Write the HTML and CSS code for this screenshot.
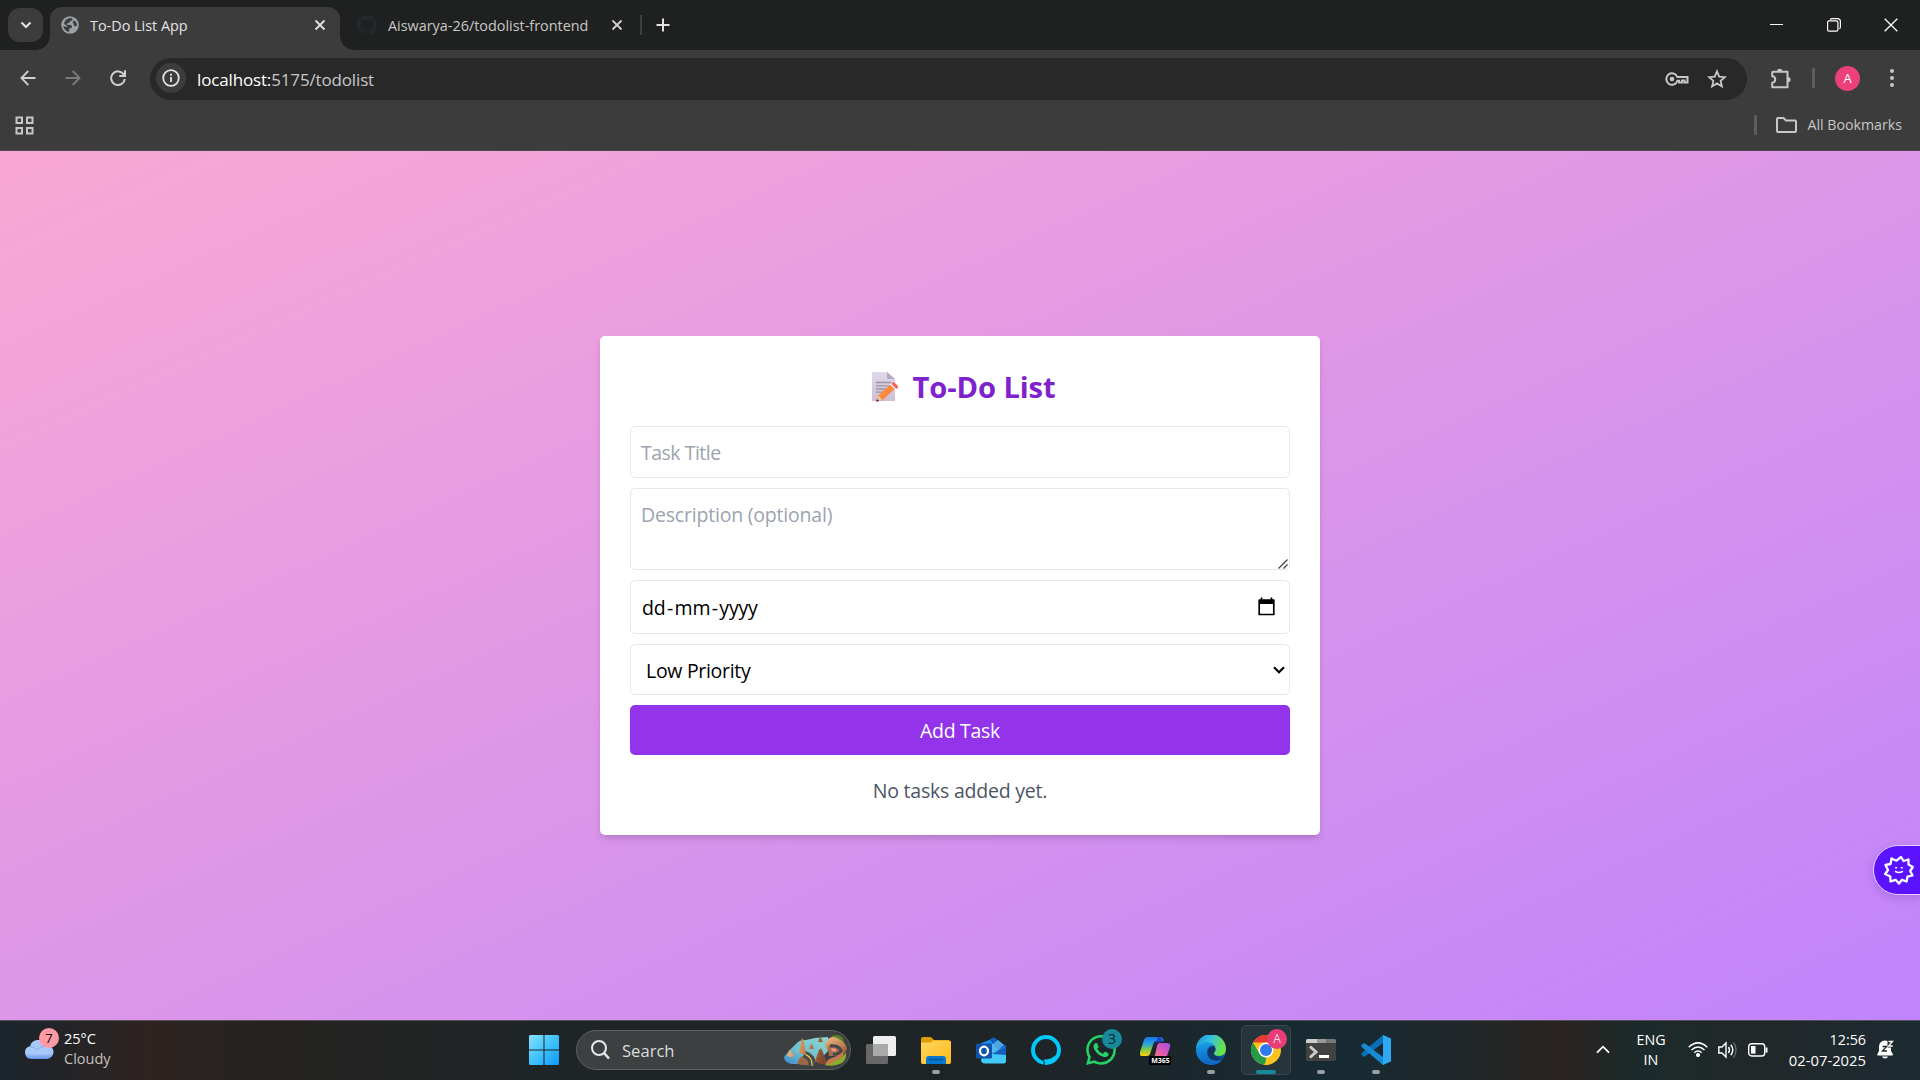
FILE: index.html
```html
<!DOCTYPE html>
<html lang="en">
<head>
<meta charset="utf-8">
<title>To-Do List App</title>
<link rel="stylesheet" href="styles.css">
</head>
<body>
<header class="browser">
  <div class="tabstrip">
    <button class="tab-search" aria-label="Search tabs"><svg width="12" height="8" viewBox="0 0 12 8" fill="none" stroke="#e3e3e3" stroke-width="2"><path d="M1.500 1.500 6 6l4.500-4.500"/></svg></button>
    <div class="tab tab-active">
      <svg class="favicon" width="18" height="18" viewBox="0 0 18 18"><circle cx="9" cy="9" r="8.800" fill="#9aa0a6"/><path d="M9.800 2q1 .2 1.700.7.400 1.800-1.600 2.300-1.500.4-1.500 1.500 0 .9-1.600.8-1.100-.1-1 .8.200 1 1.600.8 1.800-.3 2.900.5 1 .8.700 1.800-.3.900-1.500.9-1.300 0-1.200 1.300.1 1.500-.8 2.500Q3.300 14.500 2.200 10q2.500.4 3.800 1.300.7-1.200-.8-2Q3.500 8.600 3 7.200 4.500 2.200 9.800 2z" fill="#3c3c3c"/><path d="M13 4.500q3 1.700 3 5-1.300 1.300-2.800.2-.9-.8-.5-2.200-2.300-.9.300-3z" fill="#3c3c3c"/></svg>
      <span class="tab-title">To-Do List App</span>
      <svg class="close" width="12" height="12" viewBox="0 0 12 12" stroke="#e3e3e3" stroke-width="1.800"><path d="m1.500 1.500 9 9m0-9-9 9"/></svg>
    </div>
    <div class="tab tab-idle">
      <svg class="favicon" width="20" height="20" viewBox="0 0 16 16" fill="#24292f"><path d="M8 0C3.580 0 0 3.580 0 8c0 3.540 2.290 6.530 5.470 7.590.4.070.55-.17.55-.38 0-.19-.01-.82-.01-1.490-2.010.37-2.530-.49-2.690-.94-.09-.23-.48-.94-.82-1.130-.28-.15-.68-.52-.01-.53.63-.01 1.080.58 1.230.82.720 1.210 1.870.87 2.330.66.070-.52.280-.87.510-1.070-1.780-.2-3.640-.89-3.640-3.950 0-.87.310-1.590.82-2.150-.08-.2-.36-1.020.080-2.120 0 0 .67-.21 2.200.82.640-.18 1.320-.27 2-.27s1.360.090 2 .27c1.530-1.040 2.200-.82 2.200-.82.440 1.100.160 1.920.080 2.120.510.560.82 1.270.82 2.150 0 3.070-1.870 3.750-3.650 3.950.290.250.540.730.540 1.480 0 1.070-.010 1.930-.010 2.200 0 .210.150.460.550.380A8 8 0 0 0 16 8c0-4.420-3.580-8-8-8z"/></svg>
      <span class="tab-title">Aiswarya-26/todolist-frontend</span>
      <svg class="close" width="12" height="12" viewBox="0 0 12 12" stroke="#d0d0d0" stroke-width="1.800"><path d="m1.500 1.500 9 9m0-9-9 9"/></svg>
    </div>
    <span class="tab-divider"></span>
    <svg class="new-tab" width="14" height="14" viewBox="0 0 14 14" stroke="#e3e3e3" stroke-width="2"><path d="M7 .5v13M.5 7h13"/></svg>
    <div class="window-controls">
      <svg width="14" height="14" viewBox="0 0 14 14" stroke="#fff"><path d="M0 6.500h13"/></svg>
      <svg width="14" height="14" viewBox="0 0 14 14" fill="none" stroke="#fff" stroke-width="1.200"><rect x=".6" y="2.900" width="10.300" height="10.300" rx="1.500"/><path d="M3.200 1.600Q3.800.6 5 .6h5.400q3 0 3 3V9q0 1.200-1 1.800"/></svg>
      <svg width="14" height="14" viewBox="0 0 14 14" stroke="#fff" stroke-width="1.300"><path d="m.7.7 12.600 12.600m0-12.600L.7 13.300"/></svg>
    </div>
  </div>
  <div class="toolbar">
    <svg class="nav" width="16" height="16" viewBox="0 0 16 16" fill="none" stroke="#d0d0d0" stroke-width="1.800"><path d="M15.500 8H1.500m6.800-7L1.400 8l6.900 7"/></svg>
    <svg class="nav" width="16" height="16" viewBox="0 0 16 16" fill="none" stroke="#7b7b7b" stroke-width="1.800"><path d="M.5 8h14M7.700 1l6.900 7-6.900 7"/></svg>
    <svg class="nav" width="16" height="16" viewBox="0 0 16 16" fill="none" stroke="#d0d0d0" stroke-width="2"><path d="M13.800 4.700A6.800 6.800 0 1 0 14.700 9M15 .3v5.700H9.300"/></svg>
    <div class="omnibox">
      <span class="site-info"><svg width="18" height="18" viewBox="0 0 18 18" fill="none" stroke="#e3e3e3" stroke-width="1.800"><circle cx="9" cy="9" r="7.800"/><path d="M9 8v5M9 4.700v2"/></svg></span>
      <span class="url"><b>localhost:</b>5175/todolist</span>
      <svg width="24" height="16" viewBox="0 0 24 16" fill="none" stroke="#c7c7c7" stroke-width="2"><path d="M12.300 6H22.500v5.500h-3V9.500h-2.400v2h-3V9.800h-1.700A5.700 5.700 0 1 1 12.300 6z"/><circle cx="7" cy="8" r="2.300" fill="#c7c7c7" stroke="none"/></svg>
      <svg width="20" height="20" viewBox="0 0 20 20" fill="none" stroke="#c7c7c7" stroke-width="1.800"><path d="m10 2.300 2.200 5.300 5.700.5-4.300 3.700 1.300 5.600L10 14.400l-4.900 3 1.300-5.600-4.300-3.700 5.700-.5z"/></svg>
    </div>
    <svg class="puzzle" width="22" height="22" viewBox="0 0 22 22"><path d="M3 3.800h14.500v15.400H2.200v-4.500c4-.2 4-6.200 0-6.400V4.600q0-.8.800-.8z" fill="none" stroke="#c7c7c7" stroke-width="2" stroke-linejoin="round"/><path d="M7 3.500a2.700 2.700 0 0 1 5.400 0zM18 9a2.600 2.600 0 0 1 0 5.200z" fill="#c7c7c7"/></svg>
    <span class="bar-divider"></span>
    <span class="avatar">A</span>
    <svg class="kebab" width="4" height="18" viewBox="0 0 4 18" fill="#c7c7c7"><circle cx="2" cy="2" r="2"/><circle cx="2" cy="9" r="2"/><circle cx="2" cy="16" r="2"/></svg>
  </div>
  <div class="bookmarks">
    <svg width="19" height="19" viewBox="0 0 19 19" fill="none" stroke="#c7c7c7" stroke-width="2"><path d="M1.500 1.500h5.500v5.500H1.500zM12 1.500h5.500v5.500H12zM1.500 12h5.500v5.500H1.500zM12 12h5.500v5.500H12z"/></svg>
    <span class="bar-divider bm-divider"></span>
    <svg width="21" height="16" viewBox="0 0 21 16" fill="none" stroke="#c7c7c7" stroke-width="2" stroke-linejoin="round"><path d="M1 2q0-1 1-1h5.500L10 3.500h9q1 0 1 1V14q0 1-1 1H2q-1 0-1-1z"/></svg>
    <span class="bm-label">All Bookmarks</span>
  </div>
</header>

<main class="page">
  <section class="card">
    <h1 class="heading">
      <svg width="28" height="30" viewBox="0 0 28 30"><defs><linearGradient id="paper" x2="0" y2="1"><stop stop-color="#e0d8e8"/><stop offset="1" stop-color="#cdc0d4"/></linearGradient><linearGradient id="pen" x2="1" y2="1"><stop stop-color="#ffa63f"/><stop offset="1" stop-color="#ff6f3e"/></linearGradient></defs><path d="M1 0h15l8 7v22H1z" fill="url(#paper)"/><path d="m16 0 8 7h-7q-1 0-1-1z" fill="#b5aabd"/><path d="M5 10.500h15M5 13.800h15M5 17h11M5 20.200h8" stroke="#9d93a6" stroke-width="1.300"/><path d="m5.500 29.500 1.800-6.300L19 12.700l4.500 4.400-11.800 11z" fill="url(#pen)"/><path d="m19 12.700 1.800-1.500 4.400 4.300-1.700 1.600z" fill="#efe4ee"/><path d="m20.500 11.500 1.200-1q1-.8 2 .2l3 3q1 1 0 2l-1.500 1.300z" fill="#f9604f"/><path d="m7.300 23.500-2 6 6.100-2z" fill="#edc5a0"/><path d="m6 27-.9 2.800 3-.9z" fill="#471c3c"/></svg>
      <span>To-Do List</span>
    </h1>
    <form class="form">
      <div class="field"><span class="hint hint-title">Task Title</span></div>
      <div class="field field-area"><span class="hint">Description (optional)</span><svg class="grip" width="10" height="10" viewBox="0 0 10 10" stroke="#444" stroke-width="1.300"><path d="m.5 9.500 9-9M5.500 9.500l4-4"/></svg></div>
      <div class="field field-date"><span class="date"><i>dd</i><i>-</i><i>mm</i><i>-</i><i>yyyy</i></span><svg width="17" height="19" viewBox="0 0 17 19"><path d="M1.200 3.200h14.600v14.300H1.200z" fill="none" stroke="#000" stroke-width="1.700" stroke-linejoin="round"/><path d="M1 3h15v4H1zM2.700.5h1.700V3H2.700zM12.600.5h1.700V3h-1.700z"/></svg></div>
      <div class="field field-select"><span>Low Priority</span><svg width="12" height="8" viewBox="0 0 12 8" fill="none" stroke="#000" stroke-width="2.200"><path d="M1 1.200 6 6.200l5-5"/></svg></div>
      <button type="button" class="submit">Add Task</button>
    </form>
    <p class="empty">No tasks added yet.</p>
  </section>
  <div class="assistant"><svg width="32" height="32" viewBox="-16 -16 32 32" fill="none" stroke="#fff" stroke-width="2.300" stroke-linejoin="round" stroke-linecap="round"><path d="M0 13.500-3.500 9.800-8.500 11.500-8.700 6.500-13.800 4-11 0-13.500-5-8.500-6-7.500-11.500-2.500-9.300 2-13 4.500-9 9.500-10.500 9.500-5.500 13.800-3 11.200 1 13.500 5.500 8.500 6.700 7.500 11.500 3 9.800z"/><path d="M-3.500 1.500q3.500 2 7 0M-3.300-2.300h.8M2.400-2.300h.8" stroke-width="1.500"/></svg></div>
</main>

<footer class="taskbar">
  <div class="weather">
    <span class="weather-icon"><svg width="30" height="20" viewBox="0 0 30 20"><defs><linearGradient id="cloud" x2="0" y2="1"><stop stop-color="#a9cafa"/><stop offset=".7" stop-color="#a8c9f8"/><stop offset="1" stop-color="#6596e8"/></linearGradient></defs><path d="M7 19a6.500 6.500 0 0 1-1-12.800A8.500 8.500 0 0 1 22 5a7 7 0 0 1 1 14z" fill="url(#cloud)"/><path d="M6 6.500q5 0 7 3.500M13 10q3-4 9-4" fill="none" stroke="#84aff0"/></svg><b class="count">7</b></span>
    <span class="weather-text"><span>25°C</span><span class="cloudy">Cloudy</span></span>
  </div>
  <div class="dock">
    <span class="app"><svg width="30" height="30" viewBox="0 0 30 30"><defs><linearGradient id="win" gradientUnits="userSpaceOnUse" x2="30" y2="30"><stop stop-color="#86e1fd"/><stop offset=".5" stop-color="#3fc3fd"/><stop offset="1" stop-color="#0c98fb"/></linearGradient></defs><path d="M1 0h13.500v14.500H0V1zM15.500 0H29l1 1v13.500H15.500zM0 15.500h14.500V30H1l-1-1zM15.500 15.500H30V29l-1 1H15.500z" fill="url(#win)"/></svg></span>
    <div class="search">
      <svg width="19" height="20" viewBox="0 0 19 20" fill="none" stroke="#e6e9e9" stroke-width="2"><circle cx="8" cy="8" r="7"/><path d="m13 13 5 5.500" stroke-width="2.600"/></svg>
      <span>Search</span>
      <svg class="scene" width="64" height="32" viewBox="0 0 64 32"><defs><linearGradient id="sea" x1="1" x2="0" y2="1"><stop stop-color="#8bd6cd"/><stop offset=".6" stop-color="#70bfd0"/><stop offset="1" stop-color="#3d88d0"/></linearGradient><linearGradient id="rock" x2="1" y2=".2"><stop stop-color="#f0bd83"/><stop offset=".5" stop-color="#c98750"/><stop offset="1" stop-color="#80492f"/></linearGradient><linearGradient id="cliff" x2=".6" y2="1"><stop stop-color="#efc088"/><stop offset="1" stop-color="#a86338"/></linearGradient></defs><path d="M1 23Q7 15 14 9q2-3 9-3l9-2 13-1v14l-9 10-19 3H8Q1 28 1 23z" fill="url(#sea)"/><path d="M48 2q8-3 12 2l2 9-6-5z" fill="#55802a"/><path d="M45 5q5-4 11 0 7 4 8 10l-3 5-8-3-9-1-2-5z" fill="url(#cliff)"/><path d="M45 12q8-3 13 2 3 4-1 8H46z" fill="#ab6b45"/><path d="M47 12q9-1 11 5-2 4-8 3" fill="none" stroke="#3f464e" stroke-width="3"/><path d="m48 14 5 1v3l-4-1z" fill="#f2948e"/><path d="M14 30q2-8 8-9l9 1q2 5 1 9-9 1-18-1z" fill="#9c6848"/><path d="M21 20q9 3 8 12" fill="none" stroke="#454a50" stroke-width="7"/><path d="M22 20q8 4 7 12" fill="none" stroke="#f4cc36" stroke-width="1.200"/><path d="m16 19 2.500-13q1-3 2 0L23 19q-3 2-7 0zM4 22l2-5q1-2 2 0l3 5q-3 2-7 0zM26 15l1.500-4q1-1.500 2 0l1.500 4zM35 8l1.500-4q1-1 1.500 0L40 8zM32 27l4-11q2-3 3 0l5 13q-6 3-12-2z" fill="url(#rock)"/><path d="M42 31q2-7 10-8l8-5q2 5-2 10-6 4-16 3z" fill="#c27b49"/><path d="M42 31q8-1 11-5 7-1 10-8 1 7-4 11-8 4-17 2z" fill="#86ad2d"/></svg>
    </div>
    <span class="app"><svg width="30" height="28" viewBox="0 0 30 28"><rect y="8" width="22" height="20" rx="1.500" fill="#686868"/><rect x="7" width="23" height="20" rx="1.500" fill="#eee"/><path d="M7 8h15v12H8.500Q7 20 7 18.500z" fill="#aaa"/></svg></span>
    <span class="app running"><svg width="30" height="27" viewBox="0 0 30 27"><defs><linearGradient id="fold" x2="1" y2="1"><stop stop-color="#ffd65c"/><stop offset="1" stop-color="#ffb91e"/></linearGradient></defs><path d="M0 2q0-2 2-2h7q1 0 2 1l2 2h15v9H0z" fill="#df9c03"/><path d="M0 6.500q0-1 1-1h8q1 0 2-1l1-1h16.500Q30 3.500 30 5v20q0 2-1.500 2h-27Q0 27 0 25z" fill="url(#fold)"/><path d="M5 27v-5q0-3 3-3h14q3 0 3 3v5z" fill="#0878d0"/><path d="M8 22.500h14" stroke="#07509a" stroke-width="1.500"/></svg></span>
    <span class="app"><svg width="30" height="27" viewBox="0 0 30 27"><path d="m5 8 11-7q1.500-1 3 0l11 8v13L16 17 5 14z" fill="#0b62bf"/><path d="m14 3 8 10-6 4-11-5V6z" fill="#1b91e8"/><path d="M22 3 9 13l7 5L28 8z" fill="#69c3f3" opacity=".7"/><path d="m5 22 25-13v15q0 2.500-2.500 2.500H9Q5 26.500 5 22z" fill="#42caf7"/><path d="M16 17 30 9v9z" fill="#165fc1"/><rect y="6.500" width="16" height="15" rx="1.500" fill="#0f56aa"/><ellipse cx="8" cy="14" rx="4" ry="4.300" fill="none" stroke="#fff" stroke-width="2.300"/></svg></span>
    <span class="app"><svg width="30" height="30" viewBox="0 0 30 30"><circle cx="15" cy="15" r="13" fill="none" stroke="#00c8fa" stroke-width="4"/><path d="M12.600 24.500q7 .3 11.500-4l1.500 2.500-8.600 4-4 1z" fill="#00c8fa"/><path d="M11.500 24.800q1.600.5 1.600 2l.1 3.200" fill="none" stroke="#1f2427" stroke-width="1.100"/></svg></span>
    <span class="app"><svg width="30" height="30" viewBox="0 0 24 24" fill="#25d366"><path d="M17.472 14.382c-.297-.149-1.758-.867-2.030-.967-.273-.099-.471-.148-.670.150-.197.297-.767.966-.940 1.164-.173.199-.347.223-.644.075-.297-.150-1.255-.463-2.390-1.475-.883-.788-1.480-1.761-1.653-2.059-.173-.297-.018-.458.130-.606.134-.133.298-.347.446-.520.149-.174.198-.298.298-.497.099-.198.050-.371-.025-.520-.075-.149-.669-1.612-.916-2.207-.242-.579-.487-.500-.669-.510-.173-.008-.371-.010-.570-.010-.198 0-.520.074-.792.372-.272.297-1.040 1.016-1.040 2.479 0 1.462 1.065 2.875 1.213 3.074.149.198 2.096 3.200 5.077 4.487.709.306 1.262.489 1.694.625.712.227 1.360.195 1.871.118.571-.085 1.758-.719 2.006-1.413.248-.694.248-1.289.173-1.413-.074-.124-.272-.198-.570-.347M12.050 21.785a9.870 9.870 0 0 1-5.031-1.378l-.361-.214-3.741.982.998-3.648-.235-.374a9.860 9.860 0 0 1-1.510-5.260c.001-5.450 4.436-9.884 9.888-9.884a9.890 9.890 0 0 1 9.884 9.890c-.003 5.450-4.437 9.884-9.885 9.884M20.500 3.488A11.815 11.815 0 0 0 12.050 0C5.495 0 .160 5.335.157 11.892c0 2.096.547 4.142 1.588 5.945L.057 24l6.305-1.654a11.882 11.882 0 0 0 5.683 1.448c6.554 0 11.890-5.335 11.893-11.893A11.821 11.821 0 0 0 20.500 3.488"/></svg><b class="badge badge-wa">3</b></span>
    <span class="app"><svg width="31" height="29" viewBox="0 0 31 29"><defs><linearGradient id="cpa" x2="0" y2="1"><stop stop-color="#1a74e8"/><stop offset=".35" stop-color="#23a5e6"/><stop offset=".65" stop-color="#7fc64e"/><stop offset="1" stop-color="#ffd20a"/></linearGradient><linearGradient id="cpb" x1="1" x2="0" y2="1"><stop stop-color="#a04ee8"/><stop offset=".5" stop-color="#e558b0"/><stop offset="1" stop-color="#ff8d58"/></linearGradient></defs><path d="M8 1h12q3 0 4 4H16q-2 0-3 4l-3 9q-.7 2-3 2H2q-3 0-2-4L4 4q1-3 4-3z" fill="url(#cpa)"/><path d="M18 1q4 0 5 5h-5q-3 0-4 3z" fill="#1c46c8"/><path d="M19 7h8q4 0 3 4l-3 9q-1 3-4 3H10q4 0 5-4l2-9q1-3 2-3z" fill="url(#cpb)"/><rect x="9" y="20" width="22" height="9" rx="1" fill="#000"/></svg><small class="m365">M365</small></span>
    <span class="app running"><svg width="30" height="30" viewBox="0 0 30 30"><defs><linearGradient id="eda" x2="1" y2=".3"><stop stop-color="#1893dd"/><stop offset=".5" stop-color="#33bfe2"/><stop offset="1" stop-color="#69e348"/></linearGradient><linearGradient id="edb" x2="0" y2="1"><stop stop-color="#1aa0e8"/><stop offset="1" stop-color="#0d64c0"/></linearGradient></defs><circle cx="15" cy="15" r="15" fill="#0f4c9c"/><path d="M0 15q2-9 10-9 6 0 9 5-7-1-8 5-1 8 8 10 3 .5 7-1-4 5-11 5A15 15 0 0 1 0 15z" fill="url(#edb)"/><path d="M0 14A15 15 0 0 1 30 14q0 7-7 7-6 0-5-3 4-5-1-9Q8 3 0 14z" fill="url(#eda)"/><path d="M19 20q-2-1-1-2.500 3-4-1-6.500-6 1-5 8 2 7 10 6l5-2q-5 1-8-3z" fill="#12365f"/></svg></span>
    <span class="app running current"><svg width="30" height="30" viewBox="0 0 30 30"><circle cx="15" cy="15" r="15" fill="#fcc31e"/><path d="M2 7.500A15 15 0 0 1 28 7.500H15z" fill="#e33b2e"/><path d="M2 7.500 8.500 18.700 15 22.500l-.5 7.500A15 15 0 0 1 2 7.500z" fill="#239b48"/><path d="M21.500 18.700 15 30l-2-.1 4-7.400z" fill="#fcc31e"/><circle cx="15" cy="15" r="7.500" fill="#fff"/><circle cx="15" cy="15" r="6" fill="#3079ed"/></svg><b class="badge badge-a">A</b></span>
    <span class="app running"><svg width="30" height="22" viewBox="0 0 30 22"><rect width="30" height="22" rx="1.500" fill="#424242"/><path d="M0 4V1.500Q0 0 1.500 0H11v4z" fill="#ccc"/><path d="M11 0h9v4h-9z" fill="#999"/><path d="M20 0h8.500Q30 0 30 1.500V4H20z" fill="#777"/><path d="m4 7.500 6 5.500-6 5.500" fill="none" stroke="#ccc" stroke-width="3"/><path d="M13 17.500h10" stroke="#fff" stroke-width="3"/></svg></span>
    <span class="app running"><svg width="30" height="30" viewBox="0 0 30 30"><path d="m22 0 8 3.500v23L22 30z" fill="#2da8f2"/><path d="M22 0v8L4 21.500q-1 .5-1.700 0L.6 20q-.8-1 0-2z" fill="#0b6fb8"/><path d="M22 30v-8L4 8.500q-1-.5-1.700 0L.6 10q-.8 1 0 2z" fill="#168bd3"/></svg></span>
  </div>
  <div class="tray">
    <svg width="14" height="9" viewBox="0 0 14 9" fill="none" stroke="#fff" stroke-width="1.800"><path d="m1 7.700 6-6 6 6"/></svg>
    <span class="lang"><span>ENG</span><span>IN</span></span>
    <svg width="20" height="15" viewBox="0 0 20 15" fill="none" stroke="#fff" stroke-width="1.500"><path d="M.7 5.300Q10-3.500 19.300 5.300M3.500 8q6.500-6 13 0M6.300 10.700q3.700-3.400 7.400 0"/><circle cx="10" cy="13" r="1.300" fill="#fff"/></svg>
    <svg width="20" height="18" viewBox="0 0 20 18" fill="none" stroke="#fff" stroke-width="1.400"><path d="M.8 6H4l4-4v14l-4-4H.8zM10.500 6q2 3 0 6M12.800 3.800q4 5.200 0 10.400"/><path d="M15.500 1.500q5 7.500 0 15" stroke="#666"/></svg>
    <svg width="20" height="14" viewBox="0 0 20 14" fill="none" stroke="#fff" stroke-width="1.400"><rect x=".7" y=".7" width="16" height="12.300" rx="3"/><rect x="3" y="3" width="4.500" height="7.600" fill="#fff" stroke="none"/><path d="M18.500 4.500v5" stroke-width="2"/></svg>
    <span class="clock"><span>12:56</span><span class="day">02-07-2025</span></span>
    <svg width="17" height="19" viewBox="0 0 17 19"><path d="M.2 14.500 2 11V7q0-6 6-6.500 6 .5 6 6.500v4l2 3.500q0 1-1 1H1q-1 0-.8-1zM5 16.500h6q-.5 2-3 2t-3-2z" fill="#fff"/><path d="M5.500 6.500h4L5.500 11H10" fill="none" stroke="#222829" stroke-width="1.300"/><path d="M10.500 0H17v7.500h-6.500z" fill="#222829"/><path d="M11.500 1.500h4L11.500 6h4.300" fill="none" stroke="#fff" stroke-width="1.300"/></svg>
  </div>
</footer>
</body>
</html>
```
FILE: styles.css
```css
* { box-sizing: border-box; }
body { margin: 0; width: 1920px; height: 1080px; overflow: hidden; display: flex; flex-direction: column; font-family: "Open Sans", "Noto Sans", sans-serif; color: #000; }
svg { display: block; flex: none; }
span, i { white-space: nowrap; }
button { border: 0; padding: 0; font: inherit; }

/* Browser window */
.browser { height: 151px; background: #3c3c3c; border-bottom: 1px solid #4b484b; }
.tabstrip { height: 50px; display: flex; align-items: center; background: #1f2020; padding-left: 8px; }
.tab-search { width: 35px; height: 34px; border-radius: 12px; background: #3c3c3c; display: grid; place-items: center; }
.tab { position: relative; display: flex; align-items: center; }
.tab-active { align-self: flex-end; width: 290px; height: 43px; margin-left: 7px; padding: 0 14px 7px 11px; background: #3c3c3c; border-radius: 12px 12px 0 0; }
.tab-active::before, .tab-active::after { content: ""; position: absolute; bottom: 0; width: 14px; height: 14px; }
.tab-active::before { left: -14px; background: radial-gradient(circle at 0 0, transparent 13.500px, #3c3c3c 14px); }
.tab-active::after { right: -14px; background: radial-gradient(circle at 100% 0, transparent 13.500px, #3c3c3c 14px); }
.favicon { margin-right: 11px; }
.tab-title { flex: 1; font-size: 14.400px; line-height: 20px; color: #e3e3e3; padding-top: 1px; }
.tab-idle { width: 283px; padding-left: 17px; }
.tab-idle .tab-title { color: #c7c7c7; }
.tab-divider { width: 2px; height: 20px; margin-left: 17px; background: #3d3e3e; }
.new-tab { margin-left: 14px; }
.window-controls { display: flex; gap: 43px; margin-left: auto; padding-right: 22px; }
.toolbar { height: 58px; display: flex; align-items: center; padding-left: 20px; border-radius: 10px 10px 0 0; background: #3c3c3c; box-shadow: 0 -10px 0 -0px transparent; }
.nav { margin-right: 29px; }
.nav, .site-info, .avatar, .kebab, .toolbar > .bar-divider { transform: translateY(-1px); }
.omnibox { width: 1597px; height: 42px; border-radius: 21px; background: #282828; display: flex; align-items: center; padding: 0 20px 0 6px; margin-left: -5px; }
.site-info { width: 30px; height: 30px; border-radius: 50%; background: #3c3c3c; display: grid; place-items: center; margin-right: 11px; }
.url { flex: 1; color: #c7c7c7; font-size: 17px; letter-spacing: -.15px; }
.url b { font-weight: 400; color: #fff; }
.omnibox > svg + svg { margin-left: 18px; }
.puzzle { margin-left: 23px; }
.bar-divider { width: 3px; height: 20px; background: #5e5e5e; border-radius: 1px; margin-left: 20px; }
.avatar { width: 25px; height: 25px; border-radius: 50%; background: #ec407a; color: #fff; font-size: 13px; line-height: 25px; text-align: center; margin-left: 20px; }
.kebab { margin-left: 30px; }
.bookmarks { height: 34px; display: flex; align-items: center; padding: 0 18px 0 15px; font-size: 14.200px; color: #c7c7c7; }
.bm-divider { margin-left: auto; margin-right: 19px; }
.bm-label { margin: -2px 0 0 10px; }

/* To-do page */
.page { position: relative; flex: 1; display: grid; place-items: center; background: linear-gradient(to bottom right, #f9a8d4, #c084fc); }
.card { width: 720px; height: 499px; padding: 30px; background: #fff; border-radius: 5px; box-shadow: 0 5px 8px -1px rgba(0,0,0,.1), 0 3px 5px -2px rgba(0,0,0,.1); }
.heading { margin: 0 0 20px; height: 40px; padding: 2px 0 0 7px; display: flex; align-items: center; justify-content: center; gap: 13px; font-size: 29.200px; font-weight: 700; line-height: 40px; letter-spacing: -.1px; color: #7e22ce; }
.form { display: flex; flex-direction: column; gap: 10px; font-size: 19.500px; line-height: 30px; letter-spacing: -.3px; }
.field { height: 52px; border: 1px solid #e5e7eb; border-radius: 5px; padding: 11px 10px 9px; display: flex; align-items: center; justify-content: space-between; }
.hint { color: #9ca3af; letter-spacing: -.2px; }
.hint-title { letter-spacing: -.5px; }
.field-area { height: 82px; align-items: flex-start; padding-right: 1px; padding-bottom: 0; }
.grip { align-self: flex-end; }
.field-date { height: 54px; padding: 10px 14px 9px 11px; }
.field-date svg { margin-top: -2px; }
.date { display: flex; gap: 1.500px; letter-spacing: -.2px; }
i { font-style: normal; }
.field-select { height: 51px; padding: 11px 4px 9px 15px; }
.field-select svg { margin-top: -2px; }
.submit { height: 50px; padding-top: 2px; border-radius: 5px; background: #9333ea; color: #fff; text-align: center; letter-spacing: -.3px; }
.empty { margin: 21px 0 0; text-align: center; font-size: 19.500px; line-height: 30px; letter-spacing: -.22px; color: #4b5563; }
.assistant { position: absolute; right: -2px; top: 694px; width: 49px; height: 50px; border: 1px solid #e5cfff; border-radius: 25px 0 0 25px; background: #5b13ff; padding: 8px 0 0 9px; box-shadow: 0 3px 10px rgba(80,20,150,.2); }

/* Desktop taskbar */
.taskbar { height: 60px; border-top: 1px solid #555056; display: grid; grid-template-columns: 516px 1fr 340px; background: linear-gradient(90deg, #1b252c 0, #2e2321 150px, #252321 270px, #1f2426 520px, #1f2426 1000px, #172a33 1350px, #252626 1500px, #2b2421 1560px, #1c2a2b 1640px, #222829 1750px, #1c2a32 1920px); color: #fff; font-size: 14px; }
.weather { display: flex; padding: 7px 0 0 25px; }
.weather-icon { position: relative; width: 39px; padding-top: 12px; }
.weather-icon svg { margin-left: -1px; }
.count { position: absolute; left: 14px; top: 0; width: 20px; height: 20px; border-radius: 50%; background: #ff99a4; color: #000; font-weight: 400; font-size: 13px; line-height: 20px; text-align: center; }
.weather-text { display: flex; flex-direction: column; line-height: 20px; padding-top: 1px; font-size: 14.500px; }
.cloudy { color: #c5c0be; }
.dock { display: flex; align-items: flex-start; padding-top: 4px; }
.app { position: relative; width: 55px; height: 50px; display: grid; place-items: center; }
.search { width: 275px; height: 40px; margin: 5px 0 0 5px; border-radius: 20px; border: 1px solid #5c6061; background: #3c4041; display: flex; align-items: center; padding: 0 3px 0 14px; color: #dadddd; font-size: 16.600px; }
.search > span { margin-left: 12px; flex: 1; }
.search + .app { margin-left: 2px; }
.running::after { content: ""; position: absolute; bottom: 1px; left: 24px; width: 8px; height: 4px; border-radius: 2px; background: #9a9fa2; }
.current::before { content: ""; position: absolute; inset: 0 2px 0 3px; border: 1px solid #37474e; border-radius: 5px; background: #26353c; z-index: -1; }
.current { z-index: 0; }
.current::after { width: 20px; left: 18px; background: #168a9c; }
.badge { position: absolute; width: 20px; height: 20px; border-radius: 50%; line-height: 20px; text-align: center; font-weight: 400; font-size: 14px; }
.badge-wa { left: 29px; top: 4px; background: #178a9c; color: #06252a; }
.badge-a { left: 29px; top: 4px; background: #e93d78; color: #f6d4df; font-size: 12px; }
.m365 { position: absolute; left: 22px; top: 31px; width: 21px; text-align: center; font-size: 7px; line-height: 9px; font-weight: 700; }
.tray { display: flex; align-items: center; padding: 0 26px 2px 16px; }
.lang, .clock { display: flex; flex-direction: column; line-height: 20px; font-size: 14.300px; }
.lang { align-items: center; width: 34px; margin: 0 20px 0 24px; }
.clock { align-items: flex-end; flex: 1; margin-right: 11px; }
.day { font-size: 14.800px; }
.tray svg + svg { margin-left: 10px; }
```
